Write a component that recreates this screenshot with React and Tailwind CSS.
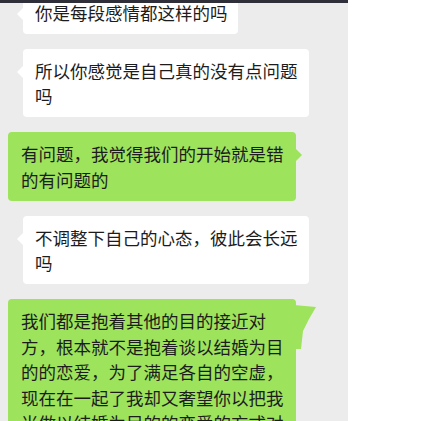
import React from 'react'

const font = { fontFamily: '"Noto Sans CJK SC", "Noto Sans", sans-serif' }

function Left({ children, first }) {
  return (
    <div className={`relative ml-[23px] self-start ${first ? '-mt-[9px]' : ''}`}>
      <span className="absolute -left-[6px] top-[17px] h-0 w-0 border-y-[6px] border-r-[6px] border-y-transparent border-r-white" />
      <div className="max-w-[286px] rounded-[4px] bg-white py-[9px] pl-3 pr-[10px] text-[17.5px] leading-[25px] text-[#1c1c1c]">
        {children}
      </div>
    </div>
  )
}

function Right({ children, big }) {
  return (
    <div className="relative ml-2 self-start">
      {big ? (
        <svg className="absolute -right-[22px] top-[6px]" width="24" height="46" viewBox="0 0 24 46">
          <polygon points="0,0 22,2 15,14 9,26 7,44 0,44" fill="#9de35c" />
        </svg>
      ) : (
        <span className="absolute -right-[6px] top-[17px] h-0 w-0 border-y-[6px] border-l-[6px] border-y-transparent border-l-[#9de35c]" />
      )}
      <div className="w-[288px] rounded-[4px] bg-[#9de35c] py-[9px] pl-[13px] pr-[12px] text-[17.5px] leading-[25.5px] text-[#1c1c1c]">
        {children}
      </div>
    </div>
  )
}

export default function App() {
  return (
    <div className="flex h-[421px] w-[423px] overflow-hidden bg-white" style={font}>
      <div className="relative flex w-[348px] flex-col gap-[15px] overflow-hidden bg-[#ececec]">
        <div className="absolute left-0 top-0 z-10 h-[3px] w-full bg-[#2e2f38]" />
        <Left first>你是每段感情都这样的吗</Left>
        <Left>所以你感觉是自己真的没有点问题吗</Left>
        <Right>有问题，我觉得我们的开始就是错的有问题的</Right>
        <Left>不调整下自己的心态，彼此会长远吗</Left>
        <Right big>
          我们都是抱着其他的目的接近对方，根本就不是抱着谈以结婚为目的的恋爱，为了满足各自的空虚，现在在一起了我却又奢望你以把我当做以结婚为目的的恋爱的方式对待
        </Right>
      </div>
      <div className="flex-1 bg-white" />
    </div>
  )
}
